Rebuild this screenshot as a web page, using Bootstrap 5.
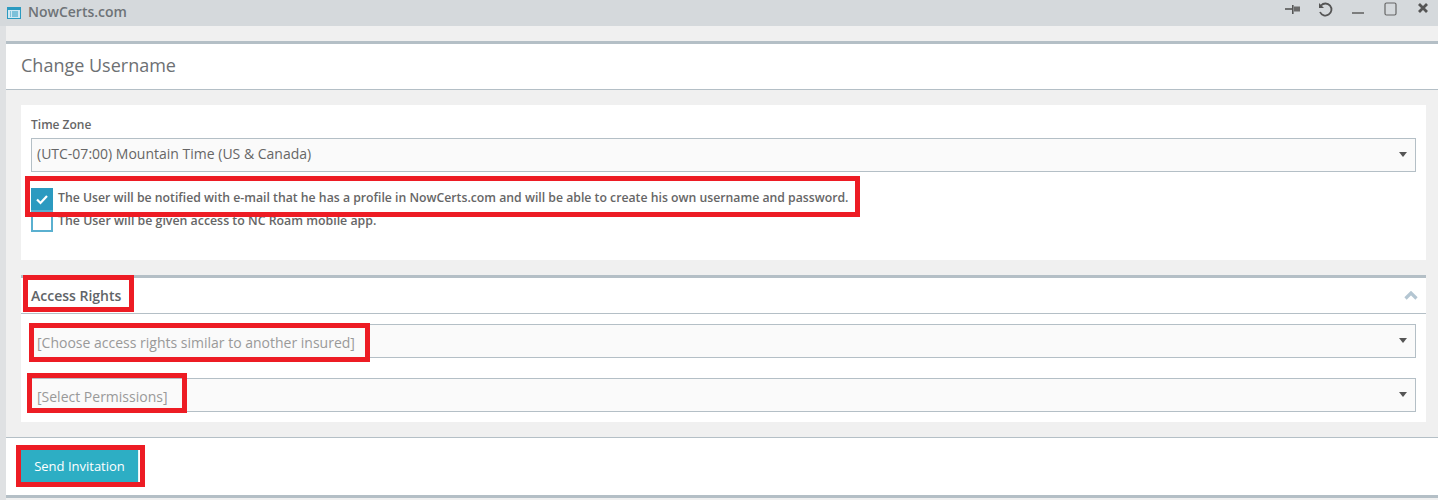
<!DOCTYPE html>
<html lang="en"><head><meta charset="utf-8"><title>NowCerts.com</title>
<link href="https://cdn.jsdelivr.net/npm/bootstrap@5.3.0/dist/css/bootstrap.min.css" rel="stylesheet">
<style>
html,body{height:500px;overflow:hidden}
body{background:#dfe1e3;font-family:"Open Sans","Liberation Sans",sans-serif;color:#676a6c;font-size:13px;position:relative}
.tbar{height:26px;background:#d5d9dc;padding:0 0 0 7px}
.tbar-title{font-size:14px;font-weight:600;color:#6e7377;margin-left:7px;line-height:24px;margin-top:-2px}
.tool{position:absolute}
.shell{margin-left:6px;background:#f0f0f0;height:474px}
.gapband{height:15px}
.page-head{background:#fff;border-top:3px solid #b4bfc6;border-bottom:1px solid #b4bfc6;height:49px;padding-left:15px;font-size:18px;line-height:43px;color:#6d7073}
.body-area{padding:15px 12px 15px 15px;height:347px}
.panel-a{background:#fff;height:155px;padding:11px 10px 0 10px}
.lbl{font-size:12px;font-weight:600;color:#666;line-height:18px;margin-bottom:4px}
.pick{height:34px;background:#fafafa;border:1px solid #b4bfc6;display:flex;align-items:center;padding-left:5px;font-size:14px;color:#666;position:relative}
.pick::after{content:"";position:absolute;right:8px;top:13px;border-style:solid;border-width:5px 4px 0 4px;border-color:#555 transparent transparent transparent}
.pick.tz{padding-bottom:4px}
.pick.empty{color:#999;padding-top:2px}
.chk-row{display:flex;height:22px;font-size:12.25px;font-weight:600;color:#666}
.chk-row span{line-height:20px;margin-left:5px}
.chk2{font-size:12.35px}
.chk2 span{line-height:21px}
.box{width:22px;height:22px;flex:none;border:2px solid #5ab0d0;background:#fff;display:flex;align-items:center;justify-content:center}
.box.on{background:#2b9ac0;border-color:#2b9ac0}
.chk1{margin-top:16px}
.panel-b{background:#fff;border-top:3px solid #b4bfc6;margin-top:15px;height:147px}
.pb-head{height:36px;border-bottom:1px solid #b4bfc6;padding:0 8px 0 10px;display:flex;align-items:center;justify-content:space-between;font-size:14px;font-weight:600;color:#5f6468}
.pb-body{padding:10px 10px 0 10px}
.pb-body .pick+.pick{margin-top:20px}
.foot{background:#fff;border-top:1px solid #b4bfc6;border-bottom:3px solid #b4bfc6;height:61px;padding:12px 0 0 15px}
.send{width:118px;height:32px;background:#2daec4;color:#fff;font-size:13px;border:0;border-right:1px solid #e8f4f6;border-radius:0;padding:2px 0 0;display:block}
.send:hover{background:#2daec4;color:#fff}
.redbox{position:absolute;border:5px solid #ed1c24;pointer-events:none}
.r1{left:25px;top:176px;width:835px;height:41px}
.r2{left:23px;top:275px;width:111px;height:37px}
.r3{left:29px;top:323px;width:341px;height:39px}
.r4{left:27px;top:373px;width:160px;height:40px}
.r5{left:16px;top:445px;width:129px;height:42px}
.t-pin{left:1285px;top:4px}.t-undo{left:1317px;top:2px}.t-min{left:1351px;top:4px}.t-max{left:1384px;top:1px}.t-x{left:1417px;top:2px}
</style></head>
<body>
<div class="tbar d-flex align-items-center">
<svg width="14" height="12" viewBox="0 0 14 12" class="flex-shrink-0"><rect x=".5" y=".5" width="13" height="11" fill="#cfe8f3" stroke="#2b9ac0"/><rect x="1" y="1" width="12" height="2" fill="#2b9ac0"/><path d="M3 5h1M5 5h6M3 7h1M5 7h6M3 9h1M5 9h6" stroke="#2b9ac0"/></svg>
<span class="tbar-title">NowCerts.com</span>
<svg class="tool t-pin" width="16" height="11" viewBox="0 0 16 11"><path d="M0 5h7" stroke="#555" stroke-width="1.6"/><path d="M7.800 1v9" stroke="#555" stroke-width="1.6"/><path d="M9 2.500h6v5H9z" fill="#6a6a6a"/></svg>
<svg class="tool t-undo" width="16" height="16" viewBox="0 0 16 16"><path d="M4 3.500A6 6 0 1 1 3 10" fill="none" stroke="#555" stroke-width="1.800"/><path d="M2 1v5h5z" fill="#555"/></svg>
<svg class="tool t-min" width="14" height="12" viewBox="0 0 14 12"><path d="M1 9h12" stroke="#666" stroke-width="1.600"/></svg>
<svg class="tool t-max" width="14" height="15" viewBox="0 0 14 15"><rect x="1" y="2" width="11" height="12" rx="1.500" fill="none" stroke="#666" stroke-width="1.200"/></svg>
<svg class="tool t-x" width="13" height="13" viewBox="0 0 13 13"><path d="M2 2l8 8M10 2l-8 8" stroke="#555" stroke-width="2.800"/></svg>
</div>
<div class="shell">
<div class="gapband"></div>
<div class="page-head">Change Username</div>
<div class="body-area">
<div class="panel-a">
<div class="lbl">Time Zone</div>
<div class="pick tz">(UTC-07:00) Mountain Time (US &amp; Canada)</div>
<div class="chk-row chk1"><div class="box on"><svg width="14" height="11" viewBox="0 0 14 11"><path d="M2 5.500l3.500 3.500 6.500-7" fill="none" stroke="#fff" stroke-width="2.200"/></svg></div><span>The User will be notified with e-mail that he has a profile in NowCerts.com and will be able to create his own username and password.</span></div>
<div class="chk-row chk2"><div class="box"></div><span>The User will be given access to NC Roam mobile app.</span></div>
</div>
<div class="panel-b">
<div class="pb-head"><span>Access Rights</span><svg width="14" height="9" viewBox="0 0 14 9"><path d="M1.500 7.500L7 2l5.500 5.500" fill="none" stroke="#b4c6d2" stroke-width="3.200"/></svg></div>
<div class="pb-body">
<div class="pick empty">[Choose access rights similar to another insured]</div>
<div class="pick empty">[Select Permissions]</div>
</div>
</div>
</div>
<div class="foot"><button type="button" class="btn send">Send Invitation</button></div>
</div>
<div class="redbox r1"></div><div class="redbox r2"></div><div class="redbox r3"></div><div class="redbox r4"></div><div class="redbox r5"></div>
</body></html>
